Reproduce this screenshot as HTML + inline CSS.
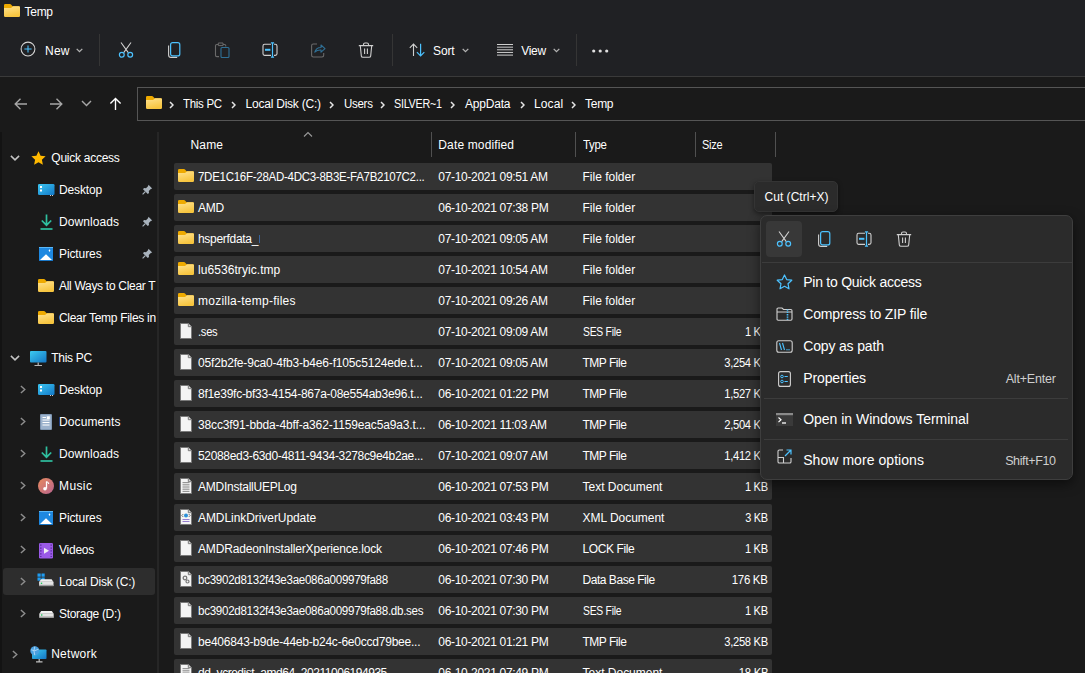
<!DOCTYPE html>
<html><head><meta charset="utf-8">
<style>
*{margin:0;padding:0;box-sizing:border-box}
html,body{width:1085px;height:673px;overflow:hidden;background:#1a1a1a;font-family:"Liberation Sans",sans-serif;color:#fff;position:relative}
.a{position:absolute}
.t{position:absolute;font-size:12px;line-height:12px;white-space:nowrap;color:#fff}
#top{position:absolute;left:0;top:0;width:1085px;height:76px;background:#202124}
#topline{position:absolute;left:0;top:76px;width:1085px;height:1px;background:#3a3a3a}
#addr{position:absolute;left:0;top:77px;width:1085px;height:54px;background:#1a1a1a}
#abox{position:absolute;left:137px;top:87px;width:960px;height:34px;border:1px solid #555555;background:#1a1a1a}
.row{position:absolute;left:174px;width:598px;height:27px;background:#333333;border-radius:2px}
.side{position:absolute;left:157px;top:132px;width:2px;height:541px;background:#262626}
.hd{position:absolute;width:1px;height:25px;top:132px;background:#505050}

</style></head><body>
<div id="top"></div><div id="topline"></div><div id="addr"></div><div id="abox"></div><div class="side"></div>
<svg class="a" style="left:4px;top:4px" width="16" height="13" viewBox="0 0 16 13"><defs><linearGradient id="fg8" x1="0" y1="0" x2="0.35" y2="1"><stop offset="0" stop-color="#ffe391"/><stop offset="1" stop-color="#f7c53f"/></linearGradient></defs><path d="M0 1.3 Q0 0 1.3 0 H6 Q6.6 0 7 0.4 L8.6 2.2 H14.7 Q16 2.2 16 3.5 V6 H0 Z" fill="#eeaa00"/><path d="M0 3.9 H6.8 Q7.3 3.9 7.7 3.5 L8.7 2.4 Q9 2.2 9.4 2.2 H14.7 Q16 2.2 16 3.5 V11.7 Q16 13 14.7 13 H1.3 Q0 13 0 11.7 Z" fill="url(#fg8)"/></svg>
<div class="t" style="left:24.5px;top:5.84px;font-size:12px;line-height:12px;color:#fff;letter-spacing:-0.267px;">Temp</div>
<svg class="a" style="left:20.4px;top:41.4px" width="16" height="16" viewBox="0 0 16 16"><circle cx="8" cy="8" r="6.9" stroke="#d4d4d4" stroke-width="1.05" fill="none"/><path d="M8 4.4 V11.6 M4.4 8 H11.6" stroke="#4cc2ff" stroke-width="1.05"/></svg>
<div class="t" style="left:45px;top:44.84px;font-size:12px;line-height:12px;color:#fff;letter-spacing:0.25px;">New</div>
<svg class="a" style="left:75.5px;top:47.8px" width="7" height="5" viewBox="0 0 7 5"><path d="M0.7 0.9 L3.5 3.7 L6.3 0.9" fill="none" stroke="#b4b4b4" stroke-width="1.3"/></svg>
<div class="a" style="left:99px;top:34px;width:1px;height:32px;background:#353535"></div>
<svg class="a" style="left:118px;top:42px" width="16" height="16" viewBox="0 0 16 16"><path d="M3 0.5 L10.3 10.6 M13 0.5 L5.7 10.6" stroke="#d0d0d0" stroke-width="1.1" fill="none"/><circle cx="3.8" cy="12.8" r="2.4" stroke="#4cc2ff" stroke-width="1.2" fill="none"/><circle cx="12.2" cy="12.8" r="2.4" stroke="#4cc2ff" stroke-width="1.2" fill="none"/></svg>
<svg class="a" style="left:166px;top:42px" width="16" height="16" viewBox="0 0 16 16"><path d="M2.6 3.5 V13 Q2.6 15.4 5 15.4 H11.2" stroke="#d0d0d0" stroke-width="1.1" fill="none"/><rect x="4.6" y="0.7" width="9.2" height="13.2" rx="2" stroke="#4cc2ff" stroke-width="1.2" fill="none"/></svg>
<svg class="a" style="left:214px;top:42px" width="16" height="16" viewBox="0 0 16 16"><path d="M9 2.5 H10.5 Q11.8 2.5 11.8 3.8 V4.6 M5 14.6 H2.8 Q1.5 14.6 1.5 13.3 V3.8 Q1.5 2.5 2.8 2.5 H4.3" stroke="#6a6a6a" stroke-width="1.1" fill="none"/><path d="M4.3 1 H9 V3.6 H4.3 Z" stroke="#6a6a6a" stroke-width="1" fill="none"/><rect x="7" y="5.5" width="8" height="10" rx="1" stroke="#2f7096" stroke-width="1.1" fill="none"/></svg>
<svg class="a" style="left:262px;top:42px" width="16" height="16" viewBox="0 0 16 16"><path d="M9 2.3 H2.6 Q1 2.3 1 3.9 V11.8 Q1 13.4 2.6 13.4 H9 M12 2.3 H13.2 Q15 2.3 15 3.9 V11.8 Q15 13.4 13.2 13.4 H12" stroke="#d0d0d0" stroke-width="1.1" fill="none"/><path d="M10.5 0.6 V15.4 M8.9 0.8 H12.1 M8.9 15.2 H12.1" stroke="#4cc2ff" stroke-width="1.2" fill="none"/><path d="M3 7.8 H8.4" stroke="#4cc2ff" stroke-width="2" fill="none"/></svg>
<svg class="a" style="left:310px;top:42px" width="16" height="16" viewBox="0 0 16 16"><path d="M7 2 H3.3 Q1.6 2 1.6 3.7 V13.3 Q1.6 15 3.3 15 H12 Q13.7 15 13.7 13.3 V11" stroke="#6a6a6a" stroke-width="1.1" fill="none"/><path d="M4.8 10.2 Q6 5.5 11 5.5 V3 L15 6.6 L11 10.2 V8 Q7 7.8 4.8 10.2 Z" stroke="#2f7096" stroke-width="1.1" fill="none" stroke-linejoin="round"/></svg>
<svg class="a" style="left:358px;top:42px" width="16" height="16" viewBox="0 0 16 16"><path d="M0.8 3.6 H15.2 M5.5 3.4 V2.4 Q5.5 1 7 1 H9 Q10.5 1 10.5 2.4 V3.4 M2.3 3.8 L3.3 13.8 Q3.5 15.2 5 15.2 H11 Q12.5 15.2 12.7 13.8 L13.7 3.8 M6.6 6.5 V12 M9.4 6.5 V12" stroke="#d0d0d0" stroke-width="1.1" fill="none"/></svg>
<div class="a" style="left:392px;top:34px;width:1px;height:32px;background:#353535"></div>
<svg class="a" style="left:409px;top:43px" width="16" height="14" viewBox="0 0 16 14"><path d="M4.5 13 V1.2 M0.8 4.8 L4.5 1.1 L8.2 4.8" stroke="#d0d0d0" stroke-width="1.1" fill="none"/><path d="M11.6 0.8 V12.8 M7.9 9.2 L11.6 12.9 L15.3 9.2" stroke="#4cc2ff" stroke-width="1.2" fill="none"/></svg>
<div class="t" style="left:433px;top:44.54px;font-size:12px;line-height:12px;color:#fff;letter-spacing:-0.1px;">Sort</div>
<svg class="a" style="left:461.5px;top:47.8px" width="7" height="5" viewBox="0 0 7 5"><path d="M0.7 0.9 L3.5 3.7 L6.3 0.9" fill="none" stroke="#b4b4b4" stroke-width="1.3"/></svg>
<svg class="a" style="left:497px;top:44px" width="16" height="12" viewBox="0 0 16 12"><path d="M0 0.50 H16" stroke="#d8d8d8" stroke-width="0.95"/><path d="M0 3.15 H16" stroke="#d8d8d8" stroke-width="0.95"/><path d="M0 5.80 H16" stroke="#d8d8d8" stroke-width="0.95"/><path d="M0 8.45 H16" stroke="#d8d8d8" stroke-width="0.95"/><path d="M0 11.10 H16" stroke="#d8d8d8" stroke-width="0.95"/></svg>
<div class="t" style="left:521.2px;top:44.54px;font-size:12px;line-height:12px;color:#fff;letter-spacing:-0.267px;">View</div>
<svg class="a" style="left:552.5px;top:47.8px" width="7" height="5" viewBox="0 0 7 5"><path d="M0.7 0.9 L3.5 3.7 L6.3 0.9" fill="none" stroke="#b4b4b4" stroke-width="1.3"/></svg>
<div class="a" style="left:576px;top:34px;width:1px;height:32px;background:#353535"></div>
<svg class="a" style="left:592px;top:49px" width="18" height="4" viewBox="0 0 18 4"><circle cx="1.7" cy="2" r="1.6" fill="#e0e0e0"/><circle cx="8.2" cy="2" r="1.6" fill="#e0e0e0"/><circle cx="14.7" cy="2" r="1.6" fill="#e0e0e0"/></svg>
<svg class="a" style="left:14px;top:97px" width="14" height="14" viewBox="0 0 14 14"><path d="M13 7 H1.5 M6.5 1.8 L1.2 7 L6.5 12.2" stroke="#a6a6a6" stroke-width="1.4" fill="none"/></svg>
<svg class="a" style="left:49px;top:97px" width="14" height="14" viewBox="0 0 14 14"><path d="M1 7 H12.5 M7.5 1.8 L12.8 7 L7.5 12.2" stroke="#a6a6a6" stroke-width="1.4" fill="none"/></svg>
<svg class="a" style="left:81px;top:100px" width="11" height="7" viewBox="0 0 11 7"><path d="M1 1 L5.5 5.6 L10 1" stroke="#a6a6a6" stroke-width="1.4" fill="none"/></svg>
<svg class="a" style="left:109px;top:97px" width="13" height="14" viewBox="0 0 13 14"><path d="M6.5 13 V1.4 M1.4 6.5 L6.5 1.4 L11.6 6.5" stroke="#ffffff" stroke-width="1.35" fill="none"/></svg>
<svg class="a" style="left:146px;top:96px" width="16" height="13" viewBox="0 0 16 13"><defs><linearGradient id="fg9" x1="0" y1="0" x2="0.35" y2="1"><stop offset="0" stop-color="#ffe391"/><stop offset="1" stop-color="#f7c53f"/></linearGradient></defs><path d="M0 1.3 Q0 0 1.3 0 H6 Q6.6 0 7 0.4 L8.6 2.2 H14.7 Q16 2.2 16 3.5 V6 H0 Z" fill="#eeaa00"/><path d="M0 3.9 H6.8 Q7.3 3.9 7.7 3.5 L8.7 2.4 Q9 2.2 9.4 2.2 H14.7 Q16 2.2 16 3.5 V11.7 Q16 13 14.7 13 H1.3 Q0 13 0 11.7 Z" fill="url(#fg9)"/></svg>
<svg class="a" style="left:169px;top:100.5px" width="5" height="8" viewBox="0 0 5 8"><path d="M1 1 L4 4 L1 7" fill="none" stroke="#e6e6e6" stroke-width="1.45"/></svg>
<svg class="a" style="left:231.3px;top:100.5px" width="5" height="8" viewBox="0 0 5 8"><path d="M1 1 L4 4 L1 7" fill="none" stroke="#e6e6e6" stroke-width="1.45"/></svg>
<svg class="a" style="left:329.2px;top:100.5px" width="5" height="8" viewBox="0 0 5 8"><path d="M1 1 L4 4 L1 7" fill="none" stroke="#e6e6e6" stroke-width="1.45"/></svg>
<svg class="a" style="left:379.7px;top:100.5px" width="5" height="8" viewBox="0 0 5 8"><path d="M1 1 L4 4 L1 7" fill="none" stroke="#e6e6e6" stroke-width="1.45"/></svg>
<svg class="a" style="left:450px;top:100.5px" width="5" height="8" viewBox="0 0 5 8"><path d="M1 1 L4 4 L1 7" fill="none" stroke="#e6e6e6" stroke-width="1.45"/></svg>
<svg class="a" style="left:520px;top:100.5px" width="5" height="8" viewBox="0 0 5 8"><path d="M1 1 L4 4 L1 7" fill="none" stroke="#e6e6e6" stroke-width="1.45"/></svg>
<svg class="a" style="left:571px;top:100.5px" width="5" height="8" viewBox="0 0 5 8"><path d="M1 1 L4 4 L1 7" fill="none" stroke="#e6e6e6" stroke-width="1.45"/></svg>
<div class="t" style="left:183.4px;top:98.34px;font-size:12.001px;line-height:12.001px;color:#fff;letter-spacing:-0.3px;transform:scaleX(0.9577);transform-origin:0 0;">This PC</div>
<div class="t" style="left:245.6px;top:98.34px;font-size:12.001px;line-height:12.001px;color:#fff;letter-spacing:-0.236px;">Local Disk (C:)</div>
<div class="t" style="left:343.5px;top:98.34px;font-size:12px;line-height:12px;color:#fff;letter-spacing:-0.3px;transform:scaleX(0.9583);transform-origin:0 0;">Users</div>
<div class="t" style="left:394px;top:98.34px;font-size:12px;line-height:12px;color:#fff;letter-spacing:-0.3px;transform:scaleX(0.8979);transform-origin:0 0;">SILVER~1</div>
<div class="t" style="left:465px;top:98.34px;font-size:12px;line-height:12px;color:#fff;letter-spacing:-0.2px;">AppData</div>
<div class="t" style="left:534px;top:98.34px;font-size:12px;line-height:12px;color:#fff;letter-spacing:0.125px;">Local</div>
<div class="t" style="left:585px;top:98.34px;font-size:12px;line-height:12px;color:#fff;letter-spacing:-0.267px;">Temp</div>
<div class="t" style="left:190.5px;top:138.84px;font-size:12px;line-height:12px;color:#fff;letter-spacing:0.167px;">Name</div>
<div class="t" style="left:438.3px;top:138.84px;font-size:12px;line-height:12px;color:#fff;letter-spacing:0.142px;">Date modified</div>
<div class="t" style="left:582.5px;top:138.84px;font-size:12px;line-height:12px;color:#fff;letter-spacing:-0.3px;transform:scaleX(0.9522);transform-origin:0 0;">Type</div>
<div class="t" style="left:702px;top:138.84px;font-size:12px;line-height:12px;color:#fff;letter-spacing:-0.3px;transform:scaleX(0.914);transform-origin:0 0;">Size</div>
<div class="hd" style="left:431.0px"></div>
<div class="hd" style="left:575.0px"></div>
<div class="hd" style="left:695.0px"></div>
<div class="hd" style="left:775.0px"></div>
<svg class="a" style="left:303px;top:131px" width="10" height="7" viewBox="0 0 10 7"><path d="M1 5.5 L5 1.5 L9 5.5" fill="none" stroke="#9a9a9a" stroke-width="1.1"/></svg>
<div class="row" style="top:163px"></div>
<svg class="a" style="left:178px;top:169px" width="16" height="13" viewBox="0 0 16 13"><defs><linearGradient id="fg10" x1="0" y1="0" x2="0.35" y2="1"><stop offset="0" stop-color="#ffe391"/><stop offset="1" stop-color="#f7c53f"/></linearGradient></defs><path d="M0 1.3 Q0 0 1.3 0 H6 Q6.6 0 7 0.4 L8.6 2.2 H14.7 Q16 2.2 16 3.5 V6 H0 Z" fill="#eeaa00"/><path d="M0 3.9 H6.8 Q7.3 3.9 7.7 3.5 L8.7 2.4 Q9 2.2 9.4 2.2 H14.7 Q16 2.2 16 3.5 V11.7 Q16 13 14.7 13 H1.3 Q0 13 0 11.7 Z" fill="url(#fg10)"/></svg>
<div class="t" style="left:198px;top:170.84px;font-size:12px;line-height:12px;color:#fff;letter-spacing:-0.3px;transform:scaleX(0.9609);transform-origin:0 0;">7DE1C16F-28AD-4DC3-8B3E-FA7B2107C2...</div>
<div class="t" style="left:438.3px;top:170.84px;font-size:12px;line-height:12px;color:#fff;letter-spacing:-0.317px;">07-10-2021 09:51 AM</div>
<div class="t" style="left:582.5px;top:170.84px;font-size:12px;line-height:12px;color:#fff;letter-spacing:0.0px;">File folder</div>
<div class="row" style="top:194px"></div>
<svg class="a" style="left:178px;top:200px" width="16" height="13" viewBox="0 0 16 13"><defs><linearGradient id="fg11" x1="0" y1="0" x2="0.35" y2="1"><stop offset="0" stop-color="#ffe391"/><stop offset="1" stop-color="#f7c53f"/></linearGradient></defs><path d="M0 1.3 Q0 0 1.3 0 H6 Q6.6 0 7 0.4 L8.6 2.2 H14.7 Q16 2.2 16 3.5 V6 H0 Z" fill="#eeaa00"/><path d="M0 3.9 H6.8 Q7.3 3.9 7.7 3.5 L8.7 2.4 Q9 2.2 9.4 2.2 H14.7 Q16 2.2 16 3.5 V11.7 Q16 13 14.7 13 H1.3 Q0 13 0 11.7 Z" fill="url(#fg11)"/></svg>
<div class="t" style="left:198px;top:201.84px;font-size:12px;line-height:12px;color:#fff;letter-spacing:-0.25px;">AMD</div>
<div class="t" style="left:438.3px;top:201.84px;font-size:12px;line-height:12px;color:#fff;letter-spacing:-0.317px;">06-10-2021 07:38 PM</div>
<div class="t" style="left:582.5px;top:201.84px;font-size:12px;line-height:12px;color:#fff;letter-spacing:0.0px;">File folder</div>
<div class="row" style="top:225px"></div>
<svg class="a" style="left:178px;top:231px" width="16" height="13" viewBox="0 0 16 13"><defs><linearGradient id="fg12" x1="0" y1="0" x2="0.35" y2="1"><stop offset="0" stop-color="#ffe391"/><stop offset="1" stop-color="#f7c53f"/></linearGradient></defs><path d="M0 1.3 Q0 0 1.3 0 H6 Q6.6 0 7 0.4 L8.6 2.2 H14.7 Q16 2.2 16 3.5 V6 H0 Z" fill="#eeaa00"/><path d="M0 3.9 H6.8 Q7.3 3.9 7.7 3.5 L8.7 2.4 Q9 2.2 9.4 2.2 H14.7 Q16 2.2 16 3.5 V11.7 Q16 13 14.7 13 H1.3 Q0 13 0 11.7 Z" fill="url(#fg12)"/></svg>
<div class="t" style="left:198px;top:232.84px;font-size:12px;line-height:12px;color:#fff;letter-spacing:-0.3px;">hsperfdata_</div>
<div class="t" style="left:438.3px;top:232.84px;font-size:12px;line-height:12px;color:#fff;letter-spacing:-0.317px;">07-10-2021 09:05 AM</div>
<div class="t" style="left:582.5px;top:232.84px;font-size:12px;line-height:12px;color:#fff;letter-spacing:0.0px;">File folder</div>
<div class="row" style="top:256px"></div>
<svg class="a" style="left:178px;top:262px" width="16" height="13" viewBox="0 0 16 13"><defs><linearGradient id="fg13" x1="0" y1="0" x2="0.35" y2="1"><stop offset="0" stop-color="#ffe391"/><stop offset="1" stop-color="#f7c53f"/></linearGradient></defs><path d="M0 1.3 Q0 0 1.3 0 H6 Q6.6 0 7 0.4 L8.6 2.2 H14.7 Q16 2.2 16 3.5 V6 H0 Z" fill="#eeaa00"/><path d="M0 3.9 H6.8 Q7.3 3.9 7.7 3.5 L8.7 2.4 Q9 2.2 9.4 2.2 H14.7 Q16 2.2 16 3.5 V11.7 Q16 13 14.7 13 H1.3 Q0 13 0 11.7 Z" fill="url(#fg13)"/></svg>
<div class="t" style="left:198px;top:263.84px;font-size:12px;line-height:12px;color:#fff;letter-spacing:0.064px;">lu6536tryic.tmp</div>
<div class="t" style="left:438.3px;top:263.84px;font-size:12px;line-height:12px;color:#fff;letter-spacing:-0.317px;">07-10-2021 10:54 AM</div>
<div class="t" style="left:582.5px;top:263.84px;font-size:12px;line-height:12px;color:#fff;letter-spacing:0.0px;">File folder</div>
<div class="row" style="top:287px"></div>
<svg class="a" style="left:178px;top:293px" width="16" height="13" viewBox="0 0 16 13"><defs><linearGradient id="fg14" x1="0" y1="0" x2="0.35" y2="1"><stop offset="0" stop-color="#ffe391"/><stop offset="1" stop-color="#f7c53f"/></linearGradient></defs><path d="M0 1.3 Q0 0 1.3 0 H6 Q6.6 0 7 0.4 L8.6 2.2 H14.7 Q16 2.2 16 3.5 V6 H0 Z" fill="#eeaa00"/><path d="M0 3.9 H6.8 Q7.3 3.9 7.7 3.5 L8.7 2.4 Q9 2.2 9.4 2.2 H14.7 Q16 2.2 16 3.5 V11.7 Q16 13 14.7 13 H1.3 Q0 13 0 11.7 Z" fill="url(#fg14)"/></svg>
<div class="t" style="left:198px;top:294.84px;font-size:12px;line-height:12px;color:#fff;letter-spacing:0.241px;">mozilla-temp-files</div>
<div class="t" style="left:438.3px;top:294.84px;font-size:12px;line-height:12px;color:#fff;letter-spacing:-0.317px;">07-10-2021 09:26 AM</div>
<div class="t" style="left:582.5px;top:294.84px;font-size:12px;line-height:12px;color:#fff;letter-spacing:0.0px;">File folder</div>
<div class="row" style="top:318px"></div>
<svg class="a" style="left:180px;top:323px" width="12" height="16" viewBox="0 0 12 16"><path d="M0.5 0.5 H8.3 L11.5 3.7 V15.5 H0.5 Z" fill="#f4f4f4" stroke="#7a7a7a" stroke-width="1"/><path d="M8.3 0.5 V3.7 H11.5" fill="#d8d8d8" stroke="#7a7a7a" stroke-width="1"/></svg>
<div class="t" style="left:198px;top:325.84px;font-size:12px;line-height:12px;color:#fff;letter-spacing:-0.3px;transform:scaleX(0.9303);transform-origin:0 0;">.ses</div>
<div class="t" style="left:438.3px;top:325.84px;font-size:12px;line-height:12px;color:#fff;letter-spacing:-0.317px;">07-10-2021 09:09 AM</div>
<div class="t" style="left:582.5px;top:325.84px;font-size:12px;line-height:12px;color:#fff;letter-spacing:-0.3px;transform:scaleX(0.8641);transform-origin:0 0;">SES File</div>
<div class="t" style="right:317.3px;top:325.84px;letter-spacing:-0.3px;transform:scaleX(0.9212);transform-origin:100% 0">1 KB</div>
<div class="row" style="top:349px"></div>
<svg class="a" style="left:180px;top:354px" width="12" height="16" viewBox="0 0 12 16"><path d="M0.5 0.5 H8.3 L11.5 3.7 V15.5 H0.5 Z" fill="#f4f4f4" stroke="#7a7a7a" stroke-width="1"/><path d="M8.3 0.5 V3.7 H11.5" fill="#d8d8d8" stroke="#7a7a7a" stroke-width="1"/></svg>
<div class="t" style="left:198px;top:356.84px;font-size:12px;line-height:12px;color:#fff;letter-spacing:-0.17px;">05f2b2fe-9ca0-4fb3-b4e6-f105c5124ede.t...</div>
<div class="t" style="left:438.3px;top:356.84px;font-size:12px;line-height:12px;color:#fff;letter-spacing:-0.317px;">07-10-2021 09:05 AM</div>
<div class="t" style="left:582.5px;top:356.84px;font-size:12px;line-height:12px;color:#fff;letter-spacing:-0.486px;">TMP File</div>
<div class="t" style="right:317.3px;top:356.84px;letter-spacing:-0.3px;transform:scaleX(0.9318);transform-origin:100% 0">3,254 KB</div>
<div class="row" style="top:380px"></div>
<svg class="a" style="left:180px;top:385px" width="12" height="16" viewBox="0 0 12 16"><path d="M0.5 0.5 H8.3 L11.5 3.7 V15.5 H0.5 Z" fill="#f4f4f4" stroke="#7a7a7a" stroke-width="1"/><path d="M8.3 0.5 V3.7 H11.5" fill="#d8d8d8" stroke="#7a7a7a" stroke-width="1"/></svg>
<div class="t" style="left:198px;top:387.84px;font-size:12px;line-height:12px;color:#fff;letter-spacing:-0.27px;">8f1e39fc-bf33-4154-867a-08e554ab3e96.t...</div>
<div class="t" style="left:438.3px;top:387.84px;font-size:12px;line-height:12px;color:#fff;letter-spacing:-0.317px;">06-10-2021 01:22 PM</div>
<div class="t" style="left:582.5px;top:387.84px;font-size:12px;line-height:12px;color:#fff;letter-spacing:-0.486px;">TMP File</div>
<div class="t" style="right:317.3px;top:387.84px;letter-spacing:-0.3px;transform:scaleX(0.9318);transform-origin:100% 0">1,527 KB</div>
<div class="row" style="top:411px"></div>
<svg class="a" style="left:180px;top:416px" width="12" height="16" viewBox="0 0 12 16"><path d="M0.5 0.5 H8.3 L11.5 3.7 V15.5 H0.5 Z" fill="#f4f4f4" stroke="#7a7a7a" stroke-width="1"/><path d="M8.3 0.5 V3.7 H11.5" fill="#d8d8d8" stroke="#7a7a7a" stroke-width="1"/></svg>
<div class="t" style="left:198px;top:418.84px;font-size:12px;line-height:12px;color:#fff;letter-spacing:-0.14px;">38cc3f91-bbda-4bff-a362-1159eac5a9a3.t...</div>
<div class="t" style="left:438.3px;top:418.84px;font-size:12px;line-height:12px;color:#fff;letter-spacing:-0.317px;">06-10-2021 11:03 AM</div>
<div class="t" style="left:582.5px;top:418.84px;font-size:12px;line-height:12px;color:#fff;letter-spacing:-0.486px;">TMP File</div>
<div class="t" style="right:317.3px;top:418.84px;letter-spacing:-0.3px;transform:scaleX(0.9318);transform-origin:100% 0">2,504 KB</div>
<div class="row" style="top:442px"></div>
<svg class="a" style="left:180px;top:447px" width="12" height="16" viewBox="0 0 12 16"><path d="M0.5 0.5 H8.3 L11.5 3.7 V15.5 H0.5 Z" fill="#f4f4f4" stroke="#7a7a7a" stroke-width="1"/><path d="M8.3 0.5 V3.7 H11.5" fill="#d8d8d8" stroke="#7a7a7a" stroke-width="1"/></svg>
<div class="t" style="left:198px;top:449.84px;font-size:12px;line-height:12px;color:#fff;letter-spacing:-0.334px;">52088ed3-63d0-4811-9434-3278c9e4b2ae...</div>
<div class="t" style="left:438.3px;top:449.84px;font-size:12px;line-height:12px;color:#fff;letter-spacing:-0.317px;">07-10-2021 09:07 AM</div>
<div class="t" style="left:582.5px;top:449.84px;font-size:12px;line-height:12px;color:#fff;letter-spacing:-0.486px;">TMP File</div>
<div class="t" style="right:317.3px;top:449.84px;letter-spacing:-0.3px;transform:scaleX(0.9318);transform-origin:100% 0">1,412 KB</div>
<div class="row" style="top:473px"></div>
<svg class="a" style="left:180px;top:478px" width="12" height="16" viewBox="0 0 12 16"><path d="M0.5 0.5 H8.3 L11.5 3.7 V15.5 H0.5 Z" fill="#f4f4f4" stroke="#7a7a7a" stroke-width="1"/><path d="M8.3 0.5 V3.7 H11.5" fill="#d8d8d8" stroke="#7a7a7a" stroke-width="1"/><path d="M2.5 4.5 H9.5" stroke="#8a8a8a" stroke-width="0.9"/><path d="M2.5 6.3 H9.5" stroke="#8a8a8a" stroke-width="0.9"/><path d="M2.5 8.1 H9.5" stroke="#8a8a8a" stroke-width="0.9"/><path d="M2.5 9.9 H9.5" stroke="#8a8a8a" stroke-width="0.9"/><path d="M2.5 11.7 H9.5" stroke="#8a8a8a" stroke-width="0.9"/><path d="M2.5 13.5 H9.5" stroke="#8a8a8a" stroke-width="0.9"/></svg>
<div class="t" style="left:198px;top:480.84px;font-size:12px;line-height:12px;color:#fff;letter-spacing:-0.25px;">AMDInstallUEPLog</div>
<div class="t" style="left:438.3px;top:480.84px;font-size:12px;line-height:12px;color:#fff;letter-spacing:-0.317px;">06-10-2021 07:53 PM</div>
<div class="t" style="left:582.5px;top:480.84px;font-size:12px;line-height:12px;color:#fff;letter-spacing:-0.008px;">Text Document</div>
<div class="t" style="right:317.3px;top:480.84px;letter-spacing:-0.3px;transform:scaleX(0.9212);transform-origin:100% 0">1 KB</div>
<div class="row" style="top:504px"></div>
<svg class="a" style="left:180px;top:509px" width="12" height="16" viewBox="0 0 12 16"><path d="M0.5 0.5 H8.3 L11.5 3.7 V15.5 H0.5 Z" fill="#f4f4f4" stroke="#7a7a7a" stroke-width="1"/><path d="M8.3 0.5 V3.7 H11.5" fill="#d8d8d8" stroke="#7a7a7a" stroke-width="1"/><circle cx="6" cy="6.5" r="2" fill="#2a8fd8"/><path d="M3.3 5 L1.8 6.5 L3.3 8 M8.7 5 L10.2 6.5 L8.7 8" stroke="#555" stroke-width="0.8" fill="none"/><path d="M2.5 10.5 H9.5 M2.5 12.5 H9.5" stroke="#8a6fc8" stroke-width="0.9"/></svg>
<div class="t" style="left:198px;top:511.84px;font-size:12px;line-height:12px;color:#fff;letter-spacing:-0.067px;">AMDLinkDriverUpdate</div>
<div class="t" style="left:438.3px;top:511.84px;font-size:12px;line-height:12px;color:#fff;letter-spacing:-0.317px;">06-10-2021 03:43 PM</div>
<div class="t" style="left:582.5px;top:511.84px;font-size:12px;line-height:12px;color:#fff;letter-spacing:-0.036px;">XML Document</div>
<div class="t" style="right:317.3px;top:511.84px;letter-spacing:-0.3px;transform:scaleX(0.9124);transform-origin:100% 0">3 KB</div>
<div class="row" style="top:535px"></div>
<svg class="a" style="left:180px;top:540px" width="12" height="16" viewBox="0 0 12 16"><path d="M0.5 0.5 H8.3 L11.5 3.7 V15.5 H0.5 Z" fill="#f4f4f4" stroke="#7a7a7a" stroke-width="1"/><path d="M8.3 0.5 V3.7 H11.5" fill="#d8d8d8" stroke="#7a7a7a" stroke-width="1"/></svg>
<div class="t" style="left:198px;top:542.84px;font-size:12px;line-height:12px;color:#fff;letter-spacing:-0.174px;">AMDRadeonInstallerXperience.lock</div>
<div class="t" style="left:438.3px;top:542.84px;font-size:12px;line-height:12px;color:#fff;letter-spacing:-0.317px;">06-10-2021 07:46 PM</div>
<div class="t" style="left:582.5px;top:542.84px;font-size:12px;line-height:12px;color:#fff;letter-spacing:-0.388px;">LOCK File</div>
<div class="t" style="right:317.3px;top:542.84px;letter-spacing:-0.3px;transform:scaleX(0.9212);transform-origin:100% 0">1 KB</div>
<div class="row" style="top:566px"></div>
<svg class="a" style="left:180px;top:571px" width="12" height="16" viewBox="0 0 12 16"><path d="M0.5 0.5 H8.3 L11.5 3.7 V15.5 H0.5 Z" fill="#f4f4f4" stroke="#7a7a7a" stroke-width="1"/><path d="M8.3 0.5 V3.7 H11.5" fill="#d8d8d8" stroke="#7a7a7a" stroke-width="1"/><circle cx="5" cy="7" r="1.8" fill="none" stroke="#777" stroke-width="1.3"/><circle cx="7.5" cy="10.5" r="1.5" fill="none" stroke="#777" stroke-width="1.2"/></svg>
<div class="t" style="left:198px;top:573.84px;font-size:12px;line-height:12px;color:#fff;letter-spacing:-0.3px;transform:scaleX(0.9659);transform-origin:0 0;">bc3902d8132f43e3ae086a009979fa88</div>
<div class="t" style="left:438.3px;top:573.84px;font-size:12px;line-height:12px;color:#fff;letter-spacing:-0.317px;">06-10-2021 07:30 PM</div>
<div class="t" style="left:582.5px;top:573.84px;font-size:12px;line-height:12px;color:#fff;letter-spacing:-0.462px;">Data Base File</div>
<div class="t" style="right:317.3px;top:573.84px;letter-spacing:-0.3px;transform:scaleX(0.9534);transform-origin:100% 0">176 KB</div>
<div class="row" style="top:597px"></div>
<svg class="a" style="left:180px;top:602px" width="12" height="16" viewBox="0 0 12 16"><path d="M0.5 0.5 H8.3 L11.5 3.7 V15.5 H0.5 Z" fill="#f4f4f4" stroke="#7a7a7a" stroke-width="1"/><path d="M8.3 0.5 V3.7 H11.5" fill="#d8d8d8" stroke="#7a7a7a" stroke-width="1"/></svg>
<div class="t" style="left:198px;top:604.84px;font-size:12px;line-height:12px;color:#fff;letter-spacing:-0.3px;transform:scaleX(0.9658);transform-origin:0 0;">bc3902d8132f43e3ae086a009979fa88.db.ses</div>
<div class="t" style="left:438.3px;top:604.84px;font-size:12px;line-height:12px;color:#fff;letter-spacing:-0.317px;">06-10-2021 07:30 PM</div>
<div class="t" style="left:582.5px;top:604.84px;font-size:12px;line-height:12px;color:#fff;letter-spacing:-0.3px;transform:scaleX(0.8641);transform-origin:0 0;">SES File</div>
<div class="t" style="right:317.3px;top:604.84px;letter-spacing:-0.3px;transform:scaleX(0.9212);transform-origin:100% 0">1 KB</div>
<div class="row" style="top:628px"></div>
<svg class="a" style="left:180px;top:633px" width="12" height="16" viewBox="0 0 12 16"><path d="M0.5 0.5 H8.3 L11.5 3.7 V15.5 H0.5 Z" fill="#f4f4f4" stroke="#7a7a7a" stroke-width="1"/><path d="M8.3 0.5 V3.7 H11.5" fill="#d8d8d8" stroke="#7a7a7a" stroke-width="1"/></svg>
<div class="t" style="left:198px;top:635.84px;font-size:12px;line-height:12px;color:#fff;letter-spacing:-0.224px;">be406843-b9de-44eb-b24c-6e0ccd79bee...</div>
<div class="t" style="left:438.3px;top:635.84px;font-size:12px;line-height:12px;color:#fff;letter-spacing:-0.317px;">06-10-2021 01:21 PM</div>
<div class="t" style="left:582.5px;top:635.84px;font-size:12px;line-height:12px;color:#fff;letter-spacing:-0.486px;">TMP File</div>
<div class="t" style="right:317.3px;top:635.84px;letter-spacing:-0.3px;transform:scaleX(0.9318);transform-origin:100% 0">3,258 KB</div>
<div class="row" style="top:659px"></div>
<svg class="a" style="left:180px;top:664px" width="12" height="16" viewBox="0 0 12 16"><path d="M0.5 0.5 H8.3 L11.5 3.7 V15.5 H0.5 Z" fill="#f4f4f4" stroke="#7a7a7a" stroke-width="1"/><path d="M8.3 0.5 V3.7 H11.5" fill="#d8d8d8" stroke="#7a7a7a" stroke-width="1"/><path d="M2.5 4.5 H9.5" stroke="#8a8a8a" stroke-width="0.9"/><path d="M2.5 6.3 H9.5" stroke="#8a8a8a" stroke-width="0.9"/><path d="M2.5 8.1 H9.5" stroke="#8a8a8a" stroke-width="0.9"/><path d="M2.5 9.9 H9.5" stroke="#8a8a8a" stroke-width="0.9"/><path d="M2.5 11.7 H9.5" stroke="#8a8a8a" stroke-width="0.9"/><path d="M2.5 13.5 H9.5" stroke="#8a8a8a" stroke-width="0.9"/></svg>
<div class="t" style="left:198px;top:666.84px;font-size:12px;line-height:12px;color:#fff;letter-spacing:-0.474px;">dd_vcredist_amd64_20211006194935</div>
<div class="t" style="left:438.3px;top:666.84px;font-size:12px;line-height:12px;color:#fff;letter-spacing:-0.317px;">06-10-2021 07:49 PM</div>
<div class="t" style="left:582.5px;top:666.84px;font-size:12px;line-height:12px;color:#fff;letter-spacing:-0.008px;">Text Document</div>
<div class="t" style="right:317.3px;top:666.84px;letter-spacing:-0.3px;transform:scaleX(0.9416);transform-origin:100% 0">18 KB</div>
<div class="a" style="left:259px;top:235px;width:1px;height:8px;background:#3b78c8;opacity:0.7"></div>
<div class="a" style="left:0;top:132px;width:2px;height:541px;background:#131313"></div>
<div class="a" style="left:3px;top:568px;width:152px;height:27px;background:#2d2d2d;border-radius:3px"></div>
<div class="a" style="left:0;top:0;width:156px;height:673px;overflow:hidden"><svg class="a" style="left:10px;top:155px" width="10" height="6" viewBox="0 0 10 6"><path d="M0.9 0.9 L5 4.9 L9.1 0.9" stroke="#c4c4c4" stroke-width="1.5" fill="none"/></svg>
<svg class="a" style="left:31px;top:151px" width="15" height="14" viewBox="0 0 15 14"><path d="M7.5 0.3 L9.6 4.8 L14.6 5.3 L10.9 8.7 L11.9 13.7 L7.5 11.2 L3.1 13.7 L4.1 8.7 L0.4 5.3 L5.4 4.8 Z" fill="#ffb900"/></svg>
<div class="t" style="left:51.3px;top:152.14px;font-size:12px;line-height:12px;color:#fff;letter-spacing:-0.255px;">Quick access</div>
<svg class="a" style="left:38px;top:184px" width="17" height="12" viewBox="0 0 17 12"><defs><linearGradient id="dg1" x1="0" y1="0" x2="1" y2="1"><stop offset="0" stop-color="#3cc6f0"/><stop offset="1" stop-color="#1278c8"/></linearGradient></defs><rect x="0" y="0" width="16.5" height="11" rx="1.3" fill="url(#dg1)"/><rect x="2" y="2" width="2" height="2" fill="#fff"/><rect x="2" y="5.5" width="2" height="2" fill="#fff"/><rect x="12" y="11" width="1" height="1" fill="#ccc"/><rect x="14" y="11" width="1" height="1" fill="#ccc"/></svg>
<div class="t" style="left:59.0px;top:184.14px;font-size:12px;line-height:12px;color:#fff;letter-spacing:-0.15px;">Desktop</div>
<svg class="a" style="left:142px;top:184.3px" width="11" height="11" viewBox="0 0 11 11"><path d="M6.5 0.8 L10.2 4.5 L8.8 5 L6.8 7 L7 9 L5.8 10 L1 5.2 L2 4 L4 4.2 L6 2.2 Z" fill="#a9b3bd"/><path d="M3.3 7.7 L0.6 10.4" stroke="#a9b3bd" stroke-width="1.2"/></svg>
<svg class="a" style="left:40px;top:214px" width="13" height="16" viewBox="0 0 13 16"><path d="M6.5 0.5 V11 M1.8 6.5 L6.5 11.2 L11.2 6.5" stroke="#2fbf9f" stroke-width="1.7" fill="none"/><path d="M0.5 15 H12.5" stroke="#2fbf9f" stroke-width="1.7"/></svg>
<div class="t" style="left:59.0px;top:216.14px;font-size:12px;line-height:12px;color:#fff;letter-spacing:0.075px;">Downloads</div>
<svg class="a" style="left:142px;top:216.3px" width="11" height="11" viewBox="0 0 11 11"><path d="M6.5 0.8 L10.2 4.5 L8.8 5 L6.8 7 L7 9 L5.8 10 L1 5.2 L2 4 L4 4.2 L6 2.2 Z" fill="#a9b3bd"/><path d="M3.3 7.7 L0.6 10.4" stroke="#a9b3bd" stroke-width="1.2"/></svg>
<svg class="a" style="left:39px;top:247px" width="14" height="14" viewBox="0 0 14 14"><rect x="0" y="0" width="14" height="14" rx="1.2" fill="#1e88e0"/><rect x="0" y="0" width="14" height="1" fill="#5ab8f8"/><path d="M1 13 L7 7.2 L13 13 Z" fill="#ffffff"/><path d="M10.5 2.3 L11.4 3.6 L10.5 4.9 L9.6 3.6 Z" fill="#fff"/><rect x="0" y="13" width="14" height="1" fill="#1a78c8"/></svg>
<div class="t" style="left:59.0px;top:248.14px;font-size:12px;line-height:12px;color:#fff;letter-spacing:-0.1px;">Pictures</div>
<svg class="a" style="left:142px;top:248.3px" width="11" height="11" viewBox="0 0 11 11"><path d="M6.5 0.8 L10.2 4.5 L8.8 5 L6.8 7 L7 9 L5.8 10 L1 5.2 L2 4 L4 4.2 L6 2.2 Z" fill="#a9b3bd"/><path d="M3.3 7.7 L0.6 10.4" stroke="#a9b3bd" stroke-width="1.2"/></svg>
<svg class="a" style="left:38px;top:279px" width="16" height="13" viewBox="0 0 16 13"><defs><linearGradient id="fg2" x1="0" y1="0" x2="0.35" y2="1"><stop offset="0" stop-color="#ffe391"/><stop offset="1" stop-color="#f7c53f"/></linearGradient></defs><path d="M0 1.3 Q0 0 1.3 0 H6 Q6.6 0 7 0.4 L8.6 2.2 H14.7 Q16 2.2 16 3.5 V6 H0 Z" fill="#eeaa00"/><path d="M0 3.9 H6.8 Q7.3 3.9 7.7 3.5 L8.7 2.4 Q9 2.2 9.4 2.2 H14.7 Q16 2.2 16 3.5 V11.7 Q16 13 14.7 13 H1.3 Q0 13 0 11.7 Z" fill="url(#fg2)"/></svg>
<div class="t" style="left:59.0px;top:280.14px;font-size:12px;line-height:12px;color:#fff;letter-spacing:-0.3px;">All Ways to Clear T</div>
<svg class="a" style="left:38px;top:311px" width="16" height="13" viewBox="0 0 16 13"><defs><linearGradient id="fg3" x1="0" y1="0" x2="0.35" y2="1"><stop offset="0" stop-color="#ffe391"/><stop offset="1" stop-color="#f7c53f"/></linearGradient></defs><path d="M0 1.3 Q0 0 1.3 0 H6 Q6.6 0 7 0.4 L8.6 2.2 H14.7 Q16 2.2 16 3.5 V6 H0 Z" fill="#eeaa00"/><path d="M0 3.9 H6.8 Q7.3 3.9 7.7 3.5 L8.7 2.4 Q9 2.2 9.4 2.2 H14.7 Q16 2.2 16 3.5 V11.7 Q16 13 14.7 13 H1.3 Q0 13 0 11.7 Z" fill="url(#fg3)"/></svg>
<div class="t" style="left:59.0px;top:312.14px;font-size:12px;line-height:12px;color:#fff;letter-spacing:-0.3px;">Clear Temp Files in</div>
<svg class="a" style="left:10px;top:355px" width="10" height="6" viewBox="0 0 10 6"><path d="M0.9 0.9 L5 4.9 L9.1 0.9" stroke="#c4c4c4" stroke-width="1.5" fill="none"/></svg>
<svg class="a" style="left:30px;top:351px" width="17" height="16" viewBox="0 0 17 16"><defs><linearGradient id="pg4" x1="0" y1="0" x2="1" y2="1"><stop offset="0" stop-color="#3ccaf0"/><stop offset="1" stop-color="#1476c4"/></linearGradient></defs><rect x="0" y="0" width="16.5" height="11.5" rx="1" fill="url(#pg4)"/><path d="M8.2 11.5 V14 M4.5 14.5 H12" stroke="#b8b8b8" stroke-width="1.2"/></svg>
<div class="t" style="left:51.3px;top:352.14px;font-size:12px;line-height:12px;color:#fff;letter-spacing:-0.317px;">This PC</div>
<svg class="a" style="left:20px;top:385.3px" width="6" height="9" viewBox="0 0 6 9"><path d="M0.9 0.9 L4.8 4.5 L0.9 8.1" stroke="#8e8e8e" stroke-width="1.4" fill="none"/></svg>
<svg class="a" style="left:38px;top:384px" width="17" height="12" viewBox="0 0 17 12"><defs><linearGradient id="dg5" x1="0" y1="0" x2="1" y2="1"><stop offset="0" stop-color="#3cc6f0"/><stop offset="1" stop-color="#1278c8"/></linearGradient></defs><rect x="0" y="0" width="16.5" height="11" rx="1.3" fill="url(#dg5)"/><rect x="2" y="2" width="2" height="2" fill="#fff"/><rect x="2" y="5.5" width="2" height="2" fill="#fff"/><rect x="12" y="11" width="1" height="1" fill="#ccc"/><rect x="14" y="11" width="1" height="1" fill="#ccc"/></svg>
<div class="t" style="left:59.0px;top:384.14px;font-size:12px;line-height:12px;color:#fff;letter-spacing:-0.15px;">Desktop</div>
<svg class="a" style="left:20px;top:417.3px" width="6" height="9" viewBox="0 0 6 9"><path d="M0.9 0.9 L4.8 4.5 L0.9 8.1" stroke="#8e8e8e" stroke-width="1.4" fill="none"/></svg>
<svg class="a" style="left:40px;top:414px" width="12" height="16" viewBox="0 0 12 16"><rect x="0" y="0" width="12" height="16" rx="1" fill="#7890ac"/><rect x="0.8" y="0.8" width="10.4" height="14.4" rx="0.6" fill="#9cb2cc"/><path d="M2.5 3.5 H6 M2.5 6 H9.5 M2.5 8.5 H9.5 M2.5 11 H9.5" stroke="#fff" stroke-width="1"/><rect x="6.8" y="2.3" width="3" height="2.8" fill="#fff"/></svg>
<div class="t" style="left:59.0px;top:416.14px;font-size:12px;line-height:12px;color:#fff;letter-spacing:0.1px;">Documents</div>
<svg class="a" style="left:20px;top:449.3px" width="6" height="9" viewBox="0 0 6 9"><path d="M0.9 0.9 L4.8 4.5 L0.9 8.1" stroke="#8e8e8e" stroke-width="1.4" fill="none"/></svg>
<svg class="a" style="left:40px;top:446px" width="13" height="16" viewBox="0 0 13 16"><path d="M6.5 0.5 V11 M1.8 6.5 L6.5 11.2 L11.2 6.5" stroke="#2fbf9f" stroke-width="1.7" fill="none"/><path d="M0.5 15 H12.5" stroke="#2fbf9f" stroke-width="1.7"/></svg>
<div class="t" style="left:59.0px;top:448.14px;font-size:12px;line-height:12px;color:#fff;letter-spacing:0.075px;">Downloads</div>
<svg class="a" style="left:20px;top:481.3px" width="6" height="9" viewBox="0 0 6 9"><path d="M0.9 0.9 L4.8 4.5 L0.9 8.1" stroke="#8e8e8e" stroke-width="1.4" fill="none"/></svg>
<svg class="a" style="left:38px;top:478px" width="16" height="16" viewBox="0 0 16 16"><defs><linearGradient id="mg6" x1="0" y1="0" x2="1" y2="1"><stop offset="0" stop-color="#e88a5e"/><stop offset="1" stop-color="#b8648e"/></linearGradient></defs><circle cx="8" cy="8" r="8" fill="url(#mg6)"/><path d="M8.5 3.5 V10.5" stroke="#fff" stroke-width="1.3"/><circle cx="7" cy="10.8" r="1.8" fill="#fff"/><path d="M8.5 3.5 Q10.5 4.2 10.8 6" stroke="#fff" stroke-width="1.2" fill="none"/></svg>
<div class="t" style="left:59.0px;top:480.14px;font-size:12px;line-height:12px;color:#fff;letter-spacing:0.4px;">Music</div>
<svg class="a" style="left:20px;top:513.3px" width="6" height="9" viewBox="0 0 6 9"><path d="M0.9 0.9 L4.8 4.5 L0.9 8.1" stroke="#8e8e8e" stroke-width="1.4" fill="none"/></svg>
<svg class="a" style="left:39px;top:511px" width="14" height="14" viewBox="0 0 14 14"><rect x="0" y="0" width="14" height="14" rx="1.2" fill="#1e88e0"/><rect x="0" y="0" width="14" height="1" fill="#5ab8f8"/><path d="M1 13 L7 7.2 L13 13 Z" fill="#ffffff"/><path d="M10.5 2.3 L11.4 3.6 L10.5 4.9 L9.6 3.6 Z" fill="#fff"/><rect x="0" y="13" width="14" height="1" fill="#1a78c8"/></svg>
<div class="t" style="left:59.0px;top:512.14px;font-size:12px;line-height:12px;color:#fff;letter-spacing:-0.1px;">Pictures</div>
<svg class="a" style="left:20px;top:545.3px" width="6" height="9" viewBox="0 0 6 9"><path d="M0.9 0.9 L4.8 4.5 L0.9 8.1" stroke="#8e8e8e" stroke-width="1.4" fill="none"/></svg>
<svg class="a" style="left:39px;top:542.5px" width="14" height="16" viewBox="0 0 14 16"><rect x="0" y="0" width="14" height="15.5" rx="1.3" fill="#9a5ae6"/><path d="M5 4.8 L10 7.8 L5 10.8 Z" fill="#f0f0f0"/><path d="M1.8 1.5 V14 M12.2 1.5 V14" stroke="#5a2a9a" stroke-width="1.4" stroke-dasharray="1.3 1.6"/></svg>
<div class="t" style="left:59.0px;top:544.14px;font-size:12px;line-height:12px;color:#fff;letter-spacing:-0.24px;">Videos</div>
<svg class="a" style="left:20px;top:577.3px" width="6" height="9" viewBox="0 0 6 9"><path d="M0.9 0.9 L4.8 4.5 L0.9 8.1" stroke="#8e8e8e" stroke-width="1.4" fill="none"/></svg>
<svg class="a" style="left:37px;top:573px" width="17" height="14" viewBox="0 0 17 14"><rect x="0.5" y="0.5" width="3.2" height="3.2" fill="#1e9bf0"/><rect x="4.5" y="0.5" width="3.2" height="3.2" fill="#1e9bf0"/><rect x="0.5" y="4.5" width="3.2" height="3.2" fill="#1e9bf0"/><rect x="4.5" y="4.5" width="3.2" height="3.2" fill="#1e9bf0"/><path d="M4.0 6.3 H14.600000000000001 L16.3 8.8 H2.3 Z" fill="#f0f0f0"/><rect x="2.1" y="8.6" width="14.4" height="4.4" rx="0.6" fill="#e4e4e4"/><rect x="2.1" y="11.8" width="14.4" height="1.4" fill="#9a9a9a"/><rect x="3.8" y="9.6" width="1.4" height="1.4" fill="#22c55e"/></svg>
<div class="t" style="left:59.0px;top:576.14px;font-size:12px;line-height:12px;color:#fff;letter-spacing:-0.171px;">Local Disk (C:)</div>
<svg class="a" style="left:20px;top:609.3px" width="6" height="9" viewBox="0 0 6 9"><path d="M0.9 0.9 L4.8 4.5 L0.9 8.1" stroke="#8e8e8e" stroke-width="1.4" fill="none"/></svg>
<svg class="a" style="left:38px;top:610px" width="17" height="9" viewBox="0 0 17 9"><path d="M3.2 1.0 H13.8 L15.5 3.5 H1.5 Z" fill="#f0f0f0"/><rect x="1.3" y="3.3" width="14.4" height="4.4" rx="0.6" fill="#e4e4e4"/><rect x="1.3" y="6.5" width="14.4" height="1.4" fill="#9a9a9a"/><rect x="3" y="4.3" width="1.4" height="1.4" fill="#22c55e"/></svg>
<div class="t" style="left:59.0px;top:608.14px;font-size:12px;line-height:12px;color:#fff;letter-spacing:-0.309px;">Storage (D:)</div>
<svg class="a" style="left:12px;top:649.8px" width="6" height="9" viewBox="0 0 6 9"><path d="M0.9 0.9 L4.8 4.5 L0.9 8.1" stroke="#8e8e8e" stroke-width="1.4" fill="none"/></svg>
<svg class="a" style="left:30px;top:645.5px" width="17" height="17" viewBox="0 0 17 17"><defs><linearGradient id="ng7" x1="0" y1="0" x2="1" y2="1"><stop offset="0" stop-color="#3ccaf0"/><stop offset="1" stop-color="#1476c4"/></linearGradient></defs><rect x="2" y="3.5" width="14.5" height="9.5" rx="0.8" fill="url(#ng7)"/><path d="M9.2 13 V15.2 M6 15.8 H12.5" stroke="#c0c0c0" stroke-width="1.2"/><circle cx="4.8" cy="4.8" r="4.5" fill="#4aa0e0"/><path d="M1.2 3.8 Q4.5 6 8.5 3.2 M4.8 0.5 Q3 4.8 4.8 9.2" stroke="#bfe2fa" stroke-width="0.8" fill="none"/></svg>
<div class="t" style="left:51.2px;top:648.24px;font-size:12px;line-height:12px;color:#fff;letter-spacing:0.267px;">Network</div>
</div>
<div class="a" style="left:754px;top:181px;width:84px;height:31px;background:#2b2b2b;border:1px solid #343434;border-radius:5px;box-shadow:0 2px 5px rgba(0,0,0,0.45)"></div>
<div class="t" style="left:764.5px;top:191.34px;font-size:12px;line-height:12px;color:#ffffff;letter-spacing:0.027px;">Cut (Ctrl+X)</div>
<div class="a" style="left:760px;top:215px;width:313px;height:265px;background:#2b2b2b;border:1px solid #3e3e3e;border-radius:7px;box-shadow:0 4px 12px rgba(0,0,0,0.5)"></div>
<div class="a" style="left:766px;top:221px;width:36px;height:36px;background:#383838;border-radius:4px"></div>
<svg class="a" style="left:776px;top:231px" width="16" height="16" viewBox="0 0 16 16"><path d="M3 0.5 L10.3 10.6 M13 0.5 L5.7 10.6" stroke="#d0d0d0" stroke-width="1.1" fill="none"/><circle cx="3.8" cy="12.8" r="2.4" stroke="#4cc2ff" stroke-width="1.2" fill="none"/><circle cx="12.2" cy="12.8" r="2.4" stroke="#4cc2ff" stroke-width="1.2" fill="none"/></svg>
<svg class="a" style="left:816px;top:231px" width="16" height="16" viewBox="0 0 16 16"><path d="M2.6 3.5 V13 Q2.6 15.4 5 15.4 H11.2" stroke="#d0d0d0" stroke-width="1.1" fill="none"/><rect x="4.6" y="0.7" width="9.2" height="13.2" rx="2" stroke="#4cc2ff" stroke-width="1.2" fill="none"/></svg>
<svg class="a" style="left:856px;top:231px" width="16" height="16" viewBox="0 0 16 16"><path d="M9 2.3 H2.6 Q1 2.3 1 3.9 V11.8 Q1 13.4 2.6 13.4 H9 M12 2.3 H13.2 Q15 2.3 15 3.9 V11.8 Q15 13.4 13.2 13.4 H12" stroke="#d0d0d0" stroke-width="1.1" fill="none"/><path d="M10.5 0.6 V15.4 M8.9 0.8 H12.1 M8.9 15.2 H12.1" stroke="#4cc2ff" stroke-width="1.2" fill="none"/><path d="M3 7.8 H8.4" stroke="#4cc2ff" stroke-width="2" fill="none"/></svg>
<svg class="a" style="left:896px;top:231px" width="16" height="16" viewBox="0 0 16 16"><path d="M0.8 3.6 H15.2 M5.5 3.4 V2.4 Q5.5 1 7 1 H9 Q10.5 1 10.5 2.4 V3.4 M2.3 3.8 L3.3 13.8 Q3.5 15.2 5 15.2 H11 Q12.5 15.2 12.7 13.8 L13.7 3.8 M6.6 6.5 V12 M9.4 6.5 V12" stroke="#d0d0d0" stroke-width="1.1" fill="none"/></svg>
<div class="a" style="left:762px;top:262px;width:310px;height:1px;background:#3c3c3c"></div>
<svg class="a" style="left:776px;top:274px" width="17" height="16" viewBox="0 0 17 16"><path d="M8.5 1 L10.7 5.6 L15.8 6.2 L12 9.7 L13 14.8 L8.5 12.3 L4 14.8 L5 9.7 L1.2 6.2 L6.3 5.6 Z" fill="none" stroke="#4cc2ff" stroke-width="1.2" stroke-linejoin="round"/></svg>
<div class="t" style="left:803.2px;top:275.15px;font-size:14px;line-height:14px;color:#ffffff;letter-spacing:-0.244px;">Pin to Quick access</div>
<svg class="a" style="left:775.5px;top:307px" width="17" height="14" viewBox="0 0 17 14"><path d="M1 2.2 Q1 1 2.2 1 H6 L7.5 2.5 H14.8 Q16 2.5 16 3.7 V12 Q16 13.2 14.8 13.2 H2.2 Q1 13.2 1 12 Z M1 5 H16" stroke="#d0d0d0" stroke-width="1.1" fill="none"/><path d="M11.5 2.5 V13.2" stroke="#4cc2ff" stroke-width="1.6" stroke-dasharray="1.3 1"/></svg>
<div class="t" style="left:803.2px;top:307.15px;font-size:14px;line-height:14px;color:#ffffff;letter-spacing:-0.132px;">Compress to ZIP file</div>
<svg class="a" style="left:776px;top:339.5px" width="17" height="13" viewBox="0 0 17 13"><rect x="0.8" y="0.8" width="15.4" height="11.4" rx="2" stroke="#d0d0d0" stroke-width="1.1" fill="none"/><path d="M3.5 3 L5.5 10 M6.5 3 L8.5 10" stroke="#4cc2ff" stroke-width="1.1"/><circle cx="11" cy="9.8" r="0.7" fill="#4cc2ff"/><circle cx="13" cy="9.8" r="0.7" fill="#4cc2ff"/></svg>
<div class="t" style="left:803.2px;top:339.15px;font-size:14px;line-height:14px;color:#ffffff;letter-spacing:-0.155px;">Copy as path</div>
<svg class="a" style="left:777.5px;top:370.5px" width="13" height="16" viewBox="0 0 13 16"><rect x="0.6" y="0.6" width="11.8" height="14.8" rx="2" stroke="#d0d0d0" stroke-width="1.1" fill="none"/><circle cx="4" cy="5.5" r="1.3" stroke="#4cc2ff" stroke-width="1" fill="none"/><circle cx="4" cy="10.5" r="1.3" stroke="#4cc2ff" stroke-width="1" fill="none"/><path d="M6.5 5.5 H9.8 M6.5 10.5 H9.8" stroke="#4cc2ff" stroke-width="1.1"/></svg>
<div class="t" style="left:803.2px;top:371.15px;font-size:14px;line-height:14px;color:#ffffff;letter-spacing:-0.1px;">Properties</div>
<div class="t" style="right:29.175px;top:373.22px;font-size:12.5px;line-height:12.5px;color:#cfcfcf;letter-spacing:-0.175px">Alt+Enter</div>
<svg class="a" style="left:775.5px;top:412.5px" width="17" height="13" viewBox="0 0 17 13"><rect x="0" y="0" width="17" height="13" fill="#3a3a3a"/><rect x="0" y="0" width="17" height="2.2" fill="#8a8a8a"/><path d="M2.5 4.5 L5 6.8 L2.5 9.1" stroke="#fff" stroke-width="1.2" fill="none"/><path d="M6 10 H10" stroke="#fff" stroke-width="1.3"/></svg>
<div class="t" style="left:803.2px;top:412.15px;font-size:14px;line-height:14px;color:#ffffff;letter-spacing:-0.022px;">Open in Windows Terminal</div>
<svg class="a" style="left:776.5px;top:448.5px" width="15" height="15" viewBox="0 0 15 15"><path d="M6 1 H2.3 Q1 1 1 2.3 V12.7 Q1 14 2.3 14 H12.7 Q14 14 14 12.7 V9 M1 8.5 H6.5 V14" stroke="#d0d0d0" stroke-width="1.1" fill="none"/><path d="M8 7 L14 1 M9.5 1 H14 V5.5" stroke="#4cc2ff" stroke-width="1.2" fill="none"/></svg>
<div class="t" style="left:803.2px;top:453.15px;font-size:14px;line-height:14px;color:#ffffff;letter-spacing:0.056px;">Show more options</div>
<div class="t" style="right:29.375px;top:455.22px;font-size:12.5px;line-height:12.5px;color:#cfcfcf;letter-spacing:-0.375px">Shift+F10</div>
<div class="a" style="left:764px;top:398px;width:304px;height:1px;background:#3c3c3c"></div>
<div class="a" style="left:764px;top:439px;width:304px;height:1px;background:#3c3c3c"></div>
</body></html>
